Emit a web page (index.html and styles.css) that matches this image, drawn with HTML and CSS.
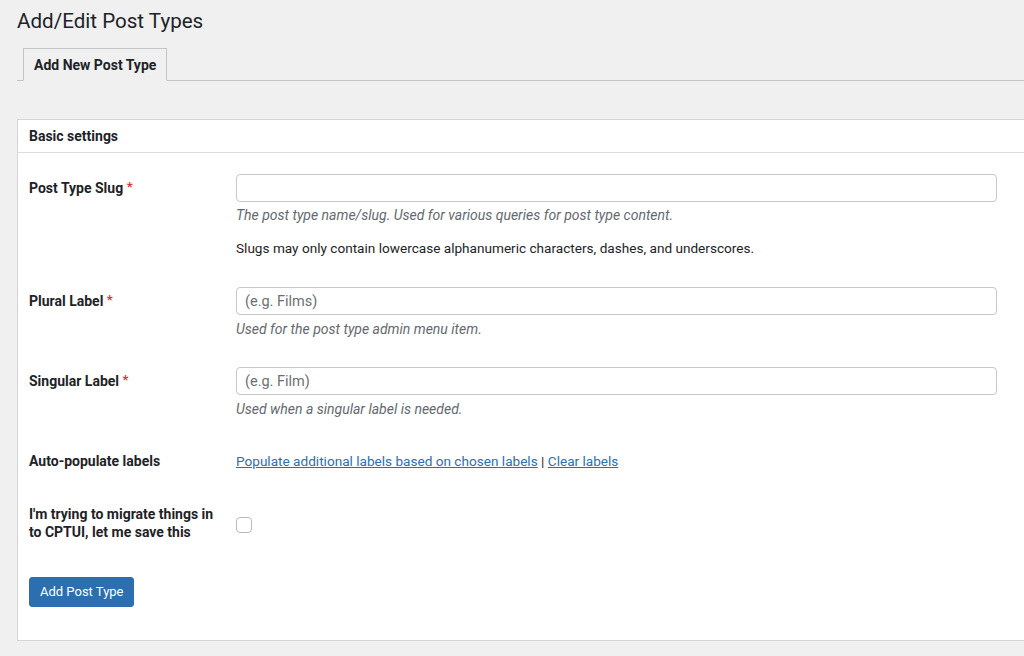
FILE: index.html
```html
<!DOCTYPE html>
<html lang="en">
<head>
<meta charset="utf-8">
<title>Add/Edit Post Types</title>
<link rel="stylesheet" href="styles.css">
</head>
<body>
<div class="wrap">
  <h1 class="title">Add/Edit Post Types</h1>
  <nav class="tabs">
    <a class="tab active" href="#">Add New Post Type</a>
  </nav>
  <section class="panel">
    <header class="panel-head">Basic settings</header>
    <div class="panel-body">
      <div class="row row-slug">
        <label class="label lbl-input">Post Type Slug <span class="req">*</span></label>
        <div class="control">
          <input class="text-input" type="text">
          <p class="desc">The post type name/slug. Used for various queries for post type content.</p>
          <p class="note">Slugs may only contain lowercase alphanumeric characters, dashes, and underscores.</p>
        </div>
      </div>
      <div class="row row-plural">
        <label class="label lbl-input">Plural Label <span class="req">*</span></label>
        <div class="control">
          <input class="text-input" type="text" placeholder="(e.g. Films)">
          <p class="desc">Used for the post type admin menu item.</p>
        </div>
      </div>
      <div class="row row-singular">
        <label class="label lbl-input">Singular Label <span class="req">*</span></label>
        <div class="control">
          <input class="text-input" type="text" placeholder="(e.g. Film)">
          <p class="desc">Used when a singular label is needed.</p>
        </div>
      </div>
      <div class="row row-auto">
        <div class="label">Auto-populate labels</div>
        <div class="control links">
          <a href="#">Populate additional labels based on chosen labels</a> | <a href="#">Clear labels</a>
        </div>
      </div>
      <div class="row row-migrate">
        <label class="label">I'm trying to migrate things in to CPTUI, let me save this</label>
        <div class="control">
          <span class="checkbox"></span>
        </div>
      </div>
      <button class="btn-primary" type="button">Add Post Type</button>
    </div>
  </section>
</div>
</body>
</html>
```

FILE: styles.css
```css
html, body {
  margin: 0;
  padding: 0;
  background: #f0f0f1;
  overflow: hidden;
}
body {
  font-family: Roboto, "Liberation Sans", sans-serif;
  font-size: 13.6px;
  color: #1d2327;
  width: 1024px;
  height: 656px;
}
.wrap {
  padding-left: 17px;
}
.title {
  margin: 0;
  padding-top: 6px;
  font-size: 20.6px;
  font-weight: 400;
  line-height: 30px;
  color: #1d2327;
}
.tabs {
  margin-top: 12px;
  border-bottom: 1px solid #c3c4c7;
  display: flex;
  padding-left: 6px;
  height: 32px;
}
.tab {
  display: block;
  box-sizing: border-box;
  height: 33px;
  padding: 0 10px;
  border: 1px solid #c3c4c7;
  border-bottom-color: #f0f0f1;
  background: #f0f0f1;
  color: #1d2327;
  font-weight: 700;
  font-size: 14px;
  line-height: 32px;
  text-decoration: none;
}
.panel {
  margin-top: 38px;
  margin-right: -30px;
  background: #fff;
  border: 1px solid #d6d6d9;
}
.panel-head {
  height: 32px;
  line-height: 32px;
  padding: 0 11px;
  font-size: 14px;
  font-weight: 700;
  border-bottom: 1px solid #dcdcde;
}
.panel-body {
  padding: 21px 11px 33px;
}
.row {
  display: grid;
  grid-template-columns: 207px 761px;
}
.label {
  font-size: 14px;
  font-weight: 700;
  line-height: 18px;
  color: #1d2327;
  padding-right: 8px;
}
.lbl-input {
  padding-top: 4px;
}
.req {
  color: #d63638;
  font-size: 13px;
  vertical-align: 2px;
}
.control p {
  margin: 0;
  line-height: 18px;
}
.text-input {
  display: block;
  box-sizing: border-box;
  width: 761px;
  height: 28px;
  margin: 0;
  padding: 0 8px;
  border: 1px solid #c8c8cc;
  border-radius: 4px;
  font-family: inherit;
  font-size: 14.5px;
  color: #2c3338;
  background: #fff;
}
.text-input::placeholder {
  color: #6b6f75;
}
.desc {
  font-style: italic;
  font-size: 14px;
  color: #646970;
}
.row-slug .desc { margin-top: 4px; }
.row-slug .note { margin-top: 15px; }
.row-plural, .row-singular { margin-top: 30px; }
.row-plural .desc, .row-singular .desc { margin-top: 5px; }
.row-singular { margin-top: 29px; }
.row-auto { margin-top: 34px; }
.links {
  line-height: 18px;
  color: #1d2327;
}
.links a {
  color: #2a6fb5;
  text-decoration: underline;
}
.row-migrate { margin-top: 35px; }
.checkbox {
  display: block;
  box-sizing: border-box;
  width: 16px;
  height: 16px;
  margin-top: 12px;
  border: 1px solid #b9b9bd;
  border-radius: 4px;
  background: #fff;
}
.btn-primary {
  display: block;
  margin-top: 36px;
  height: 30px;
  padding: 0 10px;
  border: 1px solid #2c6fb1;
  border-radius: 3px;
  background: #2c6fb1;
  color: #fff;
  font-family: inherit;
  font-size: 13px;
  line-height: 28px;
}
```
